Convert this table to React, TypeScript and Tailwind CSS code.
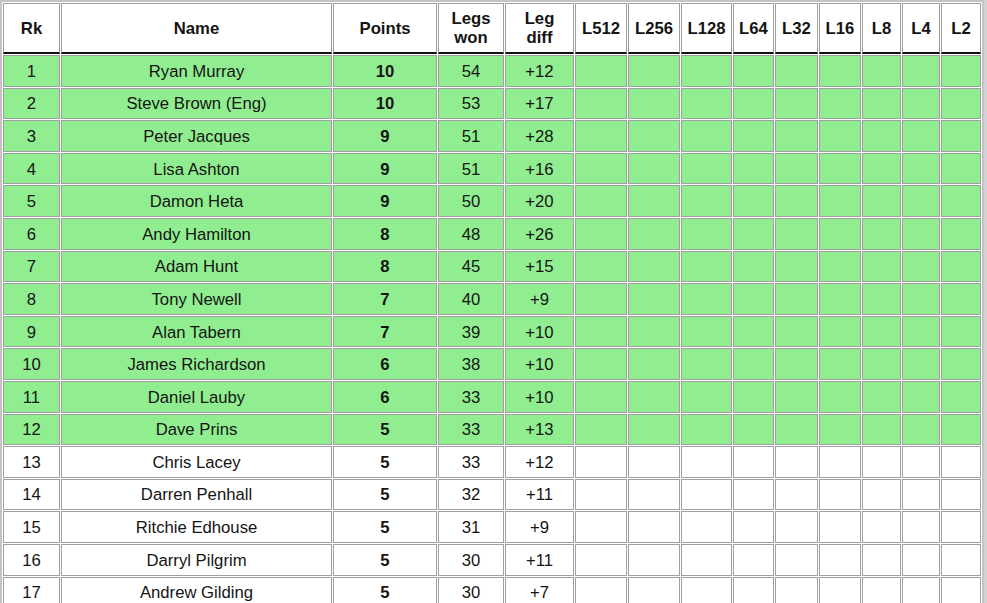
import React from 'react';

type Row = { rk: number; name: string; points: number; won: number; diff: string };

const ROWS: Row[] = [
  { rk: 1, name: 'Ryan Murray', points: 10, won: 54, diff: '+12' },
  { rk: 2, name: 'Steve Brown (Eng)', points: 10, won: 53, diff: '+17' },
  { rk: 3, name: 'Peter Jacques', points: 9, won: 51, diff: '+28' },
  { rk: 4, name: 'Lisa Ashton', points: 9, won: 51, diff: '+16' },
  { rk: 5, name: 'Damon Heta', points: 9, won: 50, diff: '+20' },
  { rk: 6, name: 'Andy Hamilton', points: 8, won: 48, diff: '+26' },
  { rk: 7, name: 'Adam Hunt', points: 8, won: 45, diff: '+15' },
  { rk: 8, name: 'Tony Newell', points: 7, won: 40, diff: '+9' },
  { rk: 9, name: 'Alan Tabern', points: 7, won: 39, diff: '+10' },
  { rk: 10, name: 'James Richardson', points: 6, won: 38, diff: '+10' },
  { rk: 11, name: 'Daniel Lauby', points: 6, won: 33, diff: '+10' },
  { rk: 12, name: 'Dave Prins', points: 5, won: 33, diff: '+13' },
  { rk: 13, name: 'Chris Lacey', points: 5, won: 33, diff: '+12' },
  { rk: 14, name: 'Darren Penhall', points: 5, won: 32, diff: '+11' },
  { rk: 15, name: 'Ritchie Edhouse', points: 5, won: 31, diff: '+9' },
  { rk: 16, name: 'Darryl Pilgrim', points: 5, won: 30, diff: '+11' },
  { rk: 17, name: 'Andrew Gilding', points: 5, won: 30, diff: '+7' },
];

const ROUNDS = ['L512', 'L256', 'L128', 'L64', 'L32', 'L16', 'L8', 'L4', 'L2'];
const ROUND_WIDTHS = ['w-[52px]', 'w-[52px]', 'w-[51px]', 'w-[41px]', 'w-[43px]', 'w-[42px]', 'w-[39px]', 'w-[38px]', 'w-[40px]'];

const th = 'border border-[#a0a0a0] border-b-2 border-b-[#111] bg-white font-bold text-center align-middle p-0 leading-[19px]';
const td = 'border border-[#a0a0a0] text-center align-middle p-0 pt-[1px] h-[31.6px]';

const App: React.FC = () => {
  return (
    <div className="flex min-h-screen bg-white text-[16.7px] text-[#141414]" style={{ fontFamily: '"Liberation Sans", Arial, sans-serif' }}>
      <table className="table-fixed w-[984px] shrink-0 border-separate border-spacing-[1px] border-2 border-[#c4c4c4] bg-white">
        <thead>
          <tr className="h-[51px]">
            <th className={`${th} w-[57px]`}>Rk</th>
            <th className={`${th} w-[271px]`}>Name</th>
            <th className={`${th} w-[104px]`}>Points</th>
            <th className={`${th} w-[66px]`}>Legs<br />won</th>
            <th className={`${th} w-[69px]`}>Leg<br />diff</th>
            {ROUNDS.map((r, i) => (
              <th key={r} className={`${th} ${ROUND_WIDTHS[i]}`}>{r}</th>
            ))}
          </tr>
        </thead>
        <tbody>
          {ROWS.map(row => {
            const bg = row.rk <= 12 ? 'bg-[#90ee90]' : 'bg-white';
            return (
              <tr key={row.rk}>
                <td className={`${td} ${bg}`}>{row.rk}</td>
                <td className={`${td} ${bg}`}>{row.name}</td>
                <td className={`${td} ${bg} font-bold`}>{row.points}</td>
                <td className={`${td} ${bg}`}>{row.won}</td>
                <td className={`${td} ${bg}`}>{row.diff}</td>
                {ROUNDS.map(r => (
                  <td key={r} className={`${td} ${bg}`}></td>
                ))}
              </tr>
            );
          })}
        </tbody>
      </table>
      <div className="flex-1 bg-[#d4d4d4]" />
    </div>
  );
};

export default App;
